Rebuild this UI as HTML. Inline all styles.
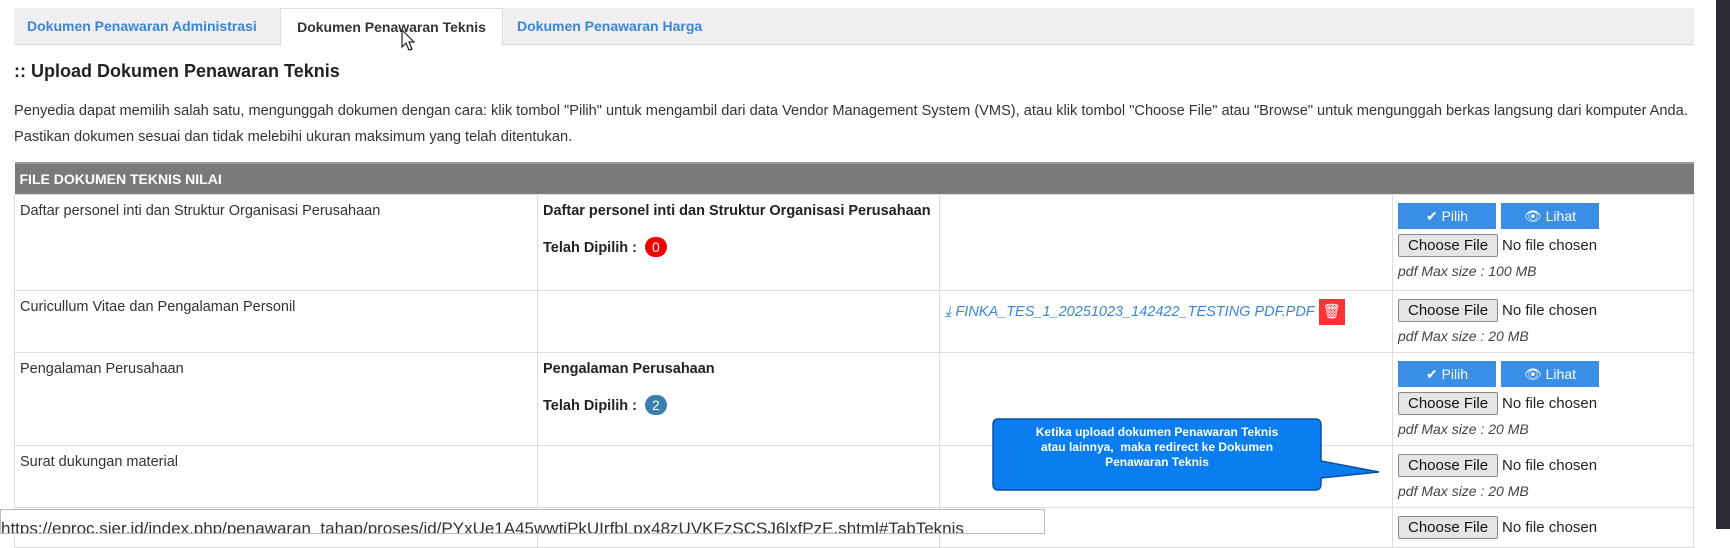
<!DOCTYPE html>
<html><head><meta charset="utf-8"><style>
*{box-sizing:border-box;margin:0;padding:0}
body{width:1730px;height:529px;overflow:hidden;background:#fff;font-family:"Liberation Sans",Arial,sans-serif;color:#333;position:relative}
.tabs{position:absolute;left:14px;top:8px;width:1680px;height:37px;background:#efeff1;border-bottom:1px solid #ddd}
.tab{position:absolute;top:0;height:37px;line-height:36px;font-size:14px;font-weight:bold;color:#3a86d6}
.tab.act{background:#fff;border:1px solid #ddd;border-bottom:none;height:38px;color:#333}
h3{position:absolute;left:14px;top:61px;font-size:18px;font-weight:bold;color:#222}
.p{position:absolute;left:14px;font-size:14.6px;color:#333}
table{position:absolute;left:14px;top:162px;width:1680px;border-collapse:collapse;font-size:14.5px}
th{background:#7a7a7a;color:#fff;text-align:left;height:31px;padding:0 5px;font-size:14px;border-top:2px solid #999}
td{border:1px solid #ddd;vertical-align:top;padding:8px 5px}
.b{font-weight:bold;color:#222}
.badge{display:inline-block;border-radius:11px;color:#fff;font-weight:normal;padding:2px 7px;font-size:14px;margin-left:4px}
.btn{display:inline-block;background:#3a8ee6;color:#fff;width:98px;height:26px;line-height:26px;text-align:center;font-size:14px;margin-right:5px}
.cf{display:inline-block;border:1px solid #888;background:#e5e5e5;border-radius:2px;padding:2px 9px;font-size:15px;color:#111}
.nf{font-size:15px;color:#222;margin-left:4px}
.ms{font-style:italic;font-size:14px;color:#444;margin-top:6px}
</style></head><body>
<div class="tabs">
<div class="tab" style="left:13px">Dokumen Penawaran Administrasi</div>
<div class="tab act" style="left:266px;width:223px;text-align:center">Dokumen Penawaran Teknis</div>
<div class="tab" style="left:503px">Dokumen Penawaran Harga</div>
</div>
<svg style="position:absolute;left:401px;top:29px" width="16" height="24" viewBox="0 0 16 24"><path d="M1 1 L1 18 L5 14 L8 21 L11 20 L8 13 L13 13 Z" fill="#fff" stroke="#222" stroke-width="1.2"/></svg>
<h3>:: Upload Dokumen Penawaran Teknis</h3>
<div class="p" style="top:103px">Penyedia dapat memilih salah satu, mengunggah dokumen dengan cara: klik tombol "Pilih" untuk mengambil dari data Vendor Management System (VMS), atau klik tombol "Choose File" atau "Browse" untuk mengunggah berkas langsung dari komputer Anda.</div>
<div class="p" style="top:129px">Pastikan dokumen sesuai dan tidak melebihi ukuran maksimum yang telah ditentukan.</div>
<table>
<tr><th colspan="4">FILE DOKUMEN TEKNIS NILAI</th></tr>
<tr style="height:96px"><td style="width:523px">Daftar personel inti dan Struktur Organisasi Perusahaan</td><td style="width:402px" class="b">Daftar personel inti dan Struktur Organisasi Perusahaan<div style="margin-top:18px">Telah Dipilih : <span class="badge" style="background:#e00">0</span></div></td><td style="width:453px"></td><td><span class="btn">✔ Pilih</span><span class="btn">👁 Lihat</span><div style="margin-top:5px"><span class="cf">Choose File</span><span class="nf">No file chosen</span></div><div class="ms">pdf Max size : 100 MB</div></td></tr>
<tr style="height:62px"><td>Curicullum Vitae dan Pengalaman Personil</td><td></td><td><span style="color:#3a86d6;font-style:italic;font-size:14.5px">⤓ FINKA_TES_1_20251023_142422_TESTING PDF.PDF</span> <span style="display:inline-block;background:#f33;color:#fff;width:26px;height:26px;text-align:center;line-height:26px;vertical-align:middle">🗑</span></td><td><span class="cf">Choose File</span><span class="nf">No file chosen</span><div class="ms">pdf Max size : 20 MB</div></td></tr>
<tr style="height:91px"><td>Pengalaman Perusahaan</td><td class="b">Pengalaman Perusahaan<div style="margin-top:18px">Telah Dipilih : <span class="badge" style="background:#3a7fb0">2</span></div></td><td></td><td><span class="btn">✔ Pilih</span><span class="btn">👁 Lihat</span><div style="margin-top:5px"><span class="cf">Choose File</span><span class="nf">No file chosen</span></div><div class="ms">pdf Max size : 20 MB</div></td></tr>
<tr style="height:61px"><td>Surat dukungan material</td><td></td><td></td><td><span class="cf">Choose File</span><span class="nf">No file chosen</span><div class="ms">pdf Max size : 20 MB</div></td></tr>
<tr style="height:40px"><td></td><td></td><td></td><td><span class="cf">Choose File</span><span class="nf">No file chosen</span></td></tr>
</table>
<svg style="position:absolute;left:990px;top:416px" width="395" height="80"><path d="M8 3 H325 Q331 3 331 9 V45 L389 56 L331 62 V68 Q331 74 325 74 H8 Q3 74 3 68 V9 Q3 3 8 3 Z" fill="#0a7df0" stroke="#0a4fa0" stroke-width="1.5"/></svg>
<div style="position:absolute;left:993px;top:425px;width:328px;text-align:center;color:#fff;font-size:12px;font-weight:bold;line-height:15px">Ketika upload dokumen Penawaran Teknis<br>atau lainnya,&nbsp; maka redirect ke Dokumen<br>Penawaran Teknis</div>
<div style="position:absolute;left:0;top:509px;width:1045px;height:25px;background:#fff;border:1px solid #bbb;font-size:17px;color:#333;padding:9px 0 0 0;white-space:nowrap;overflow:hidden">https://eproc.sier.id/index.php/penawaran_tahap/proses/id/PYxUe1A45wwtiPkUIrfbLpx48zUVKFzSCSJ6lxfPzE.shtml#TabTeknis</div>
<div style="position:absolute;left:1716px;top:0;width:14px;height:529px;background:#2c2c36"></div>
</body></html>
